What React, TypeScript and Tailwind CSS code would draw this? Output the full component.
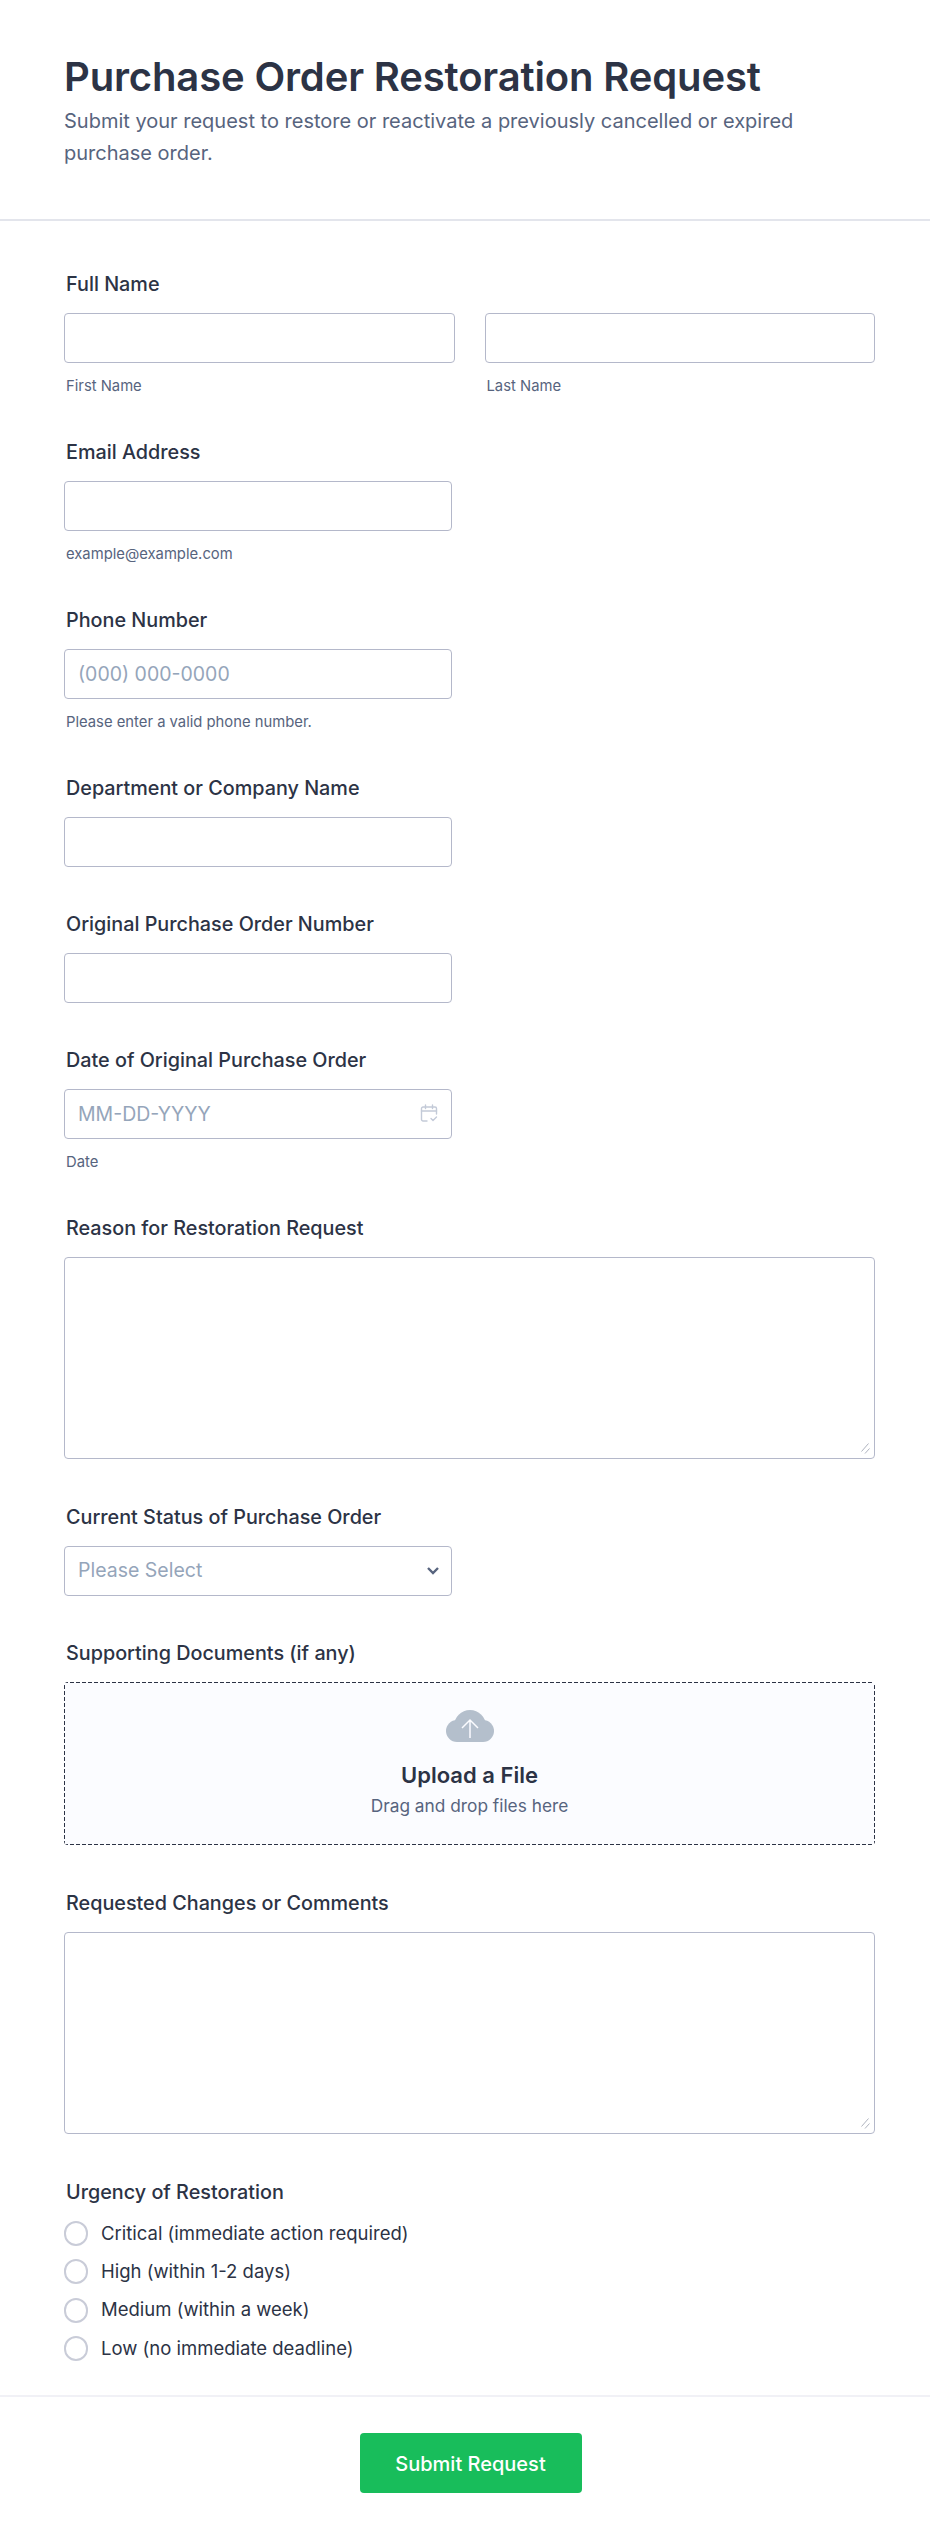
const inputClass =
  "block h-[50px] rounded-[4px] border border-[#b4b8ca] bg-white px-[13px] text-[19.5px] text-[#2c3345] placeholder:text-[#95a5ba] outline-none";

const Label = ({ children }: { children: React.ReactNode }) => (
  <label className="mb-[17px] block h-[24px] pl-[2px] text-[19.8px] leading-[24px] font-medium text-[#2c3345]">
    {children}
  </label>
);

const Sub = ({ children }: { children: React.ReactNode }) => (
  <p className="mt-[15px] h-[17px] pl-[2px] text-[14.8px] leading-[17px] text-[#57647e]">{children}</p>
);

const TextArea = () => (
  <div className="relative">
    <textarea className="block h-[202px] w-full resize-none rounded-[4px] border border-[#b4b8ca] bg-white px-3 py-2 text-[18px] text-[#2c3345] outline-none" />
    <svg className="absolute right-[5px] bottom-[5px]" width="9" height="11" viewBox="0 0 9 11" fill="none" stroke="#aeb3bf" strokeWidth="1">
      <path d="M0.500 8.500L7.500 0.500M4 10.500L8.500 5.500" />
    </svg>
  </div>
);

const CalendarIcon = () => (
  <svg width="18" height="18" viewBox="0 0 18 18" fill="none" stroke="#c3cad8" strokeWidth="1.4" strokeLinecap="round" strokeLinejoin="round">
    <path d="M7 17H3A1.500 1.500 0 0 1 1.500 15.500V4.500A1.500 1.500 0 0 1 3 3h12A1.500 1.500 0 0 1 16.500 4.500V10" />
    <path d="M1.500 7h15M5.500 1v3.500M12.500 1v3.500" />
    <path d="M11 14.500l2 2 3.500-3.500" />
  </svg>
);

const CloudIcon = () => (
  <svg width="48" height="32" viewBox="0 0 48 32">
    <g fill="#b4bfcc">
      <circle cx="24" cy="16" r="16" />
      <circle cx="11" cy="21" r="11" />
      <circle cx="37" cy="21" r="11" />
      <rect x="11" y="20" width="26" height="12" />
    </g>
    <path d="M24 28V10M16 18L24 10L32 18" fill="none" stroke="#fbfcff" strokeWidth="1.500" />
  </svg>
);

const urgency = [
  "Critical (immediate action required)",
  "High (within 1-2 days)",
  "Medium (within a week)",
  "Low (no immediate deadline)",
];

export default function App() {
  return (
    <div className="min-h-[2543px] bg-white font-['Inter',sans-serif]">
      <header className="h-[221px] border-b-2 border-[#e3e5ec] pt-[52px] pr-[55px] pl-16">
        <h1 className="text-[40px] leading-[50px] font-semibold tracking-[-0.15px] text-[#2c3345]">
          Purchase Order Restoration Request
        </h1>
        <p className="mt-[3px] text-[20px] leading-[32px] text-[#57647e]">
          Submit your request to restore or reactivate a previously cancelled or expired purchase order.
        </p>
      </header>

      <form className="pt-[51px] pr-[55px] pl-16">
        <div className="mb-[45px]">
          <Label>Full Name</Label>
          <div className="flex gap-[30px]">
            <div className="flex-1">
              <input className={`${inputClass} w-full`} />
              <Sub>First Name</Sub>
            </div>
            <div className="flex-1">
              <input className={`${inputClass} w-full`} />
              <Sub>Last Name</Sub>
            </div>
          </div>
        </div>

        <div className="mb-[45px]">
          <Label>Email Address</Label>
          <input className={`${inputClass} w-[388px]`} />
          <Sub>example@example.com</Sub>
        </div>

        <div className="mb-[45px]">
          <Label>Phone Number</Label>
          <input className={`${inputClass} w-[388px]`} placeholder="(000) 000-0000" />
          <Sub>Please enter a valid phone number.</Sub>
        </div>

        <div className="mb-[45px]">
          <Label>Department or Company Name</Label>
          <input className={`${inputClass} w-[388px]`} />
        </div>

        <div className="mb-[45px]">
          <Label>Original Purchase Order Number</Label>
          <input className={`${inputClass} w-[388px]`} />
        </div>

        <div className="mb-[45px]">
          <Label>Date of Original Purchase Order</Label>
          <div className="relative w-[388px]">
            <input className={`${inputClass} w-full`} placeholder="MM-DD-YYYY" />
            <span className="absolute top-[15px] right-[14px]">
              <CalendarIcon />
            </span>
          </div>
          <Sub>Date</Sub>
        </div>

        <div className="mb-[46px]">
          <Label>Reason for Restoration Request</Label>
          <TextArea />
        </div>

        <div className="mb-[45px]">
          <Label>Current Status of Purchase Order</Label>
          <div className="relative flex h-[50px] w-[388px] items-center rounded-[4px] border border-[#b4b8ca] bg-white px-[13px] text-[19.5px] text-[#95a5ba]">
            Please Select
            <svg className="absolute top-[19px] right-[11px]" width="14" height="10" viewBox="0 0 14 10" fill="none" stroke="#57647e" strokeWidth="2.400">
              <path d="M2 2l5 5 5-5" />
            </svg>
          </div>
        </div>

        <div className="mb-[46px]">
          <Label>Supporting Documents (if any)</Label>
          <div className="flex h-[163px] w-full flex-col items-center rounded-[4px] pt-[28px] [background:repeating-linear-gradient(90deg,#2c3345_0_4px,transparent_4px_6px)_top/100%_1px_no-repeat,repeating-linear-gradient(90deg,#2c3345_0_4px,transparent_4px_6px)_bottom/100%_1px_no-repeat,repeating-linear-gradient(0deg,#2c3345_0_4px,transparent_4px_6px)_left/1px_100%_no-repeat,repeating-linear-gradient(0deg,#2c3345_0_4px,transparent_4px_6px)_right/1px_100%_no-repeat,#fbfcff]">
            <CloudIcon />
            <p className="mt-[18px] text-[22px] leading-[30px] font-semibold text-[#2c3345]">Upload a File</p>
            <p className="mt-[4px] text-[17.3px] leading-[24px] text-[#57647e]">Drag and drop files here</p>
          </div>
        </div>

        <div className="mb-[46px]">
          <Label>Requested Changes or Comments</Label>
          <TextArea />
        </div>

        <div>
          <Label>Urgency of Restoration</Label>
          <div className="flex flex-col gap-[13.33px]">
            {urgency.map((item) => (
              <label key={item} className="flex h-[25px] items-center gap-[13px] text-[18.5px] text-[#2c3345]">
                <span className="h-[25px] w-[24px] rounded-full border-2 border-[#c9ccd8] bg-white" />
                {item}
              </label>
            ))}
          </div>
        </div>
      </form>

      <footer className="mt-[34px] flex justify-center border-t-2 border-[#f1f1f6] pt-[36px] pl-[11px]">
        <button className="h-[60px] w-[222px] rounded-[4px] bg-[#18bd5b] pt-[2px] text-[20px] font-medium text-white">
          Submit Request
        </button>
      </footer>
    </div>
  );
}
